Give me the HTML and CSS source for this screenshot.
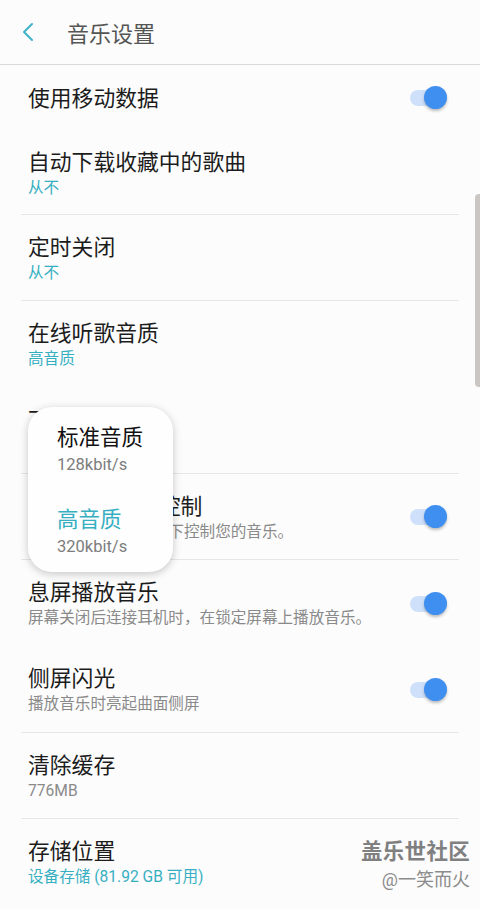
FILE: index.html
```html
<!DOCTYPE html>
<html lang="zh-CN">
<head>
    <title>音乐设置</title>
    <meta charset="UTF-8">
    <meta name="viewport" content="width=device-width, initial-scale=1.0">
    <link rel="stylesheet" href="styles.css">
</head>
<body>
    <div class="screen">
        <header class="topbar">
            <svg class="back" width="14" height="20" viewBox="0 0 14 20">
                <path d="M11 2 L3 10 L11 18" fill="none" stroke="#3bb4c6" stroke-width="2" stroke-linecap="round" stroke-linejoin="round"/>
            </svg>
            <span class="page-title">音乐设置</span>
        </header>

        <ul class="settings">
            <li class="row first plain">
                <div class="text"><div class="title">使用移动数据</div></div>
                <span class="toggle"></span>
            </li>
            <li class="row short">
                <div class="text">
                    <div class="title">自动下载收藏中的歌曲</div>
                    <div class="sub accent">从不</div>
                </div>
            </li>
            <li class="row">
                <div class="text">
                    <div class="title">定时关闭</div>
                    <div class="sub accent">从不</div>
                </div>
            </li>
            <li class="row plain">
                <div class="text">
                    <div class="title">在线听歌音质</div>
                    <div class="sub accent">高音质</div>
                </div>
            </li>
            <li class="row">
                <div class="text">
                    <div class="title">下载音质</div>
                    <div class="sub accent">标准音质</div>
                </div>
            </li>
            <li class="row">
                <div class="text">
                    <div class="title">锁定屏幕音乐控制</div>
                    <div class="sub">允许在锁定屏幕状态下控制您的音乐。</div>
                </div>
                <span class="toggle"></span>
            </li>
            <li class="row plain">
                <div class="text">
                    <div class="title">息屏播放音乐</div>
                    <div class="sub">屏幕关闭后连接耳机时，在锁定屏幕上播放音乐。</div>
                </div>
                <span class="toggle"></span>
            </li>
            <li class="row">
                <div class="text">
                    <div class="title">侧屏闪光</div>
                    <div class="sub">播放音乐时亮起曲面侧屏</div>
                </div>
                <span class="toggle"></span>
            </li>
            <li class="row">
                <div class="text">
                    <div class="title">清除缓存</div>
                    <div class="sub">776MB</div>
                </div>
            </li>
            <li class="row plain">
                <div class="text">
                    <div class="title">存储位置</div>
                    <div class="sub accent">设备存储 (81.92 GB 可用)</div>
                </div>
            </li>
        </ul>

        <!-- quality picker opened over the list -->
        <div class="popup">
            <div class="option">
                <div class="opt-name">标准音质</div>
                <div class="opt-rate">128kbit/s</div>
            </div>
            <div class="option selected">
                <div class="opt-name">高音质</div>
                <div class="opt-rate">320kbit/s</div>
            </div>
        </div>

        <div class="scrollbar"></div>

        <div class="watermark">
            <div class="wm-name">盖乐世社区</div>
            <div class="wm-user">@一笑而火</div>
        </div>
    </div>
</body>
</html>
```

FILE: styles.css
```css
* { box-sizing: border-box; }
body {
    margin: 0;
    font-family: Roboto, "Noto Sans CJK SC", sans-serif;
    background: #fcfcfc;
    color: #1c1c1c;
}
.screen {
    position: relative;
    width: 480px;
    height: 909px;
    overflow: hidden;
    background: #fcfcfc;
}
.topbar {
    height: 65px;
    display: flex;
    align-items: center;
    padding: 0 0 1px 21px;
    border-bottom: 1px solid #d9d9d9;
}
.back {
    display: block;
    margin-top: 1px;
}
.page-title {
    margin-left: 32px;
    font-size: 22px;
    color: #555;
}
.settings {
    list-style: none;
    margin: 0;
    padding: 0 21px;
}
.row {
    height: 86.25px;
    display: flex;
    align-items: center;
    border-bottom: 1px solid #e6e6e6;
    padding: 2px 12px 0 7px;
}
.row.first { height: 65px; }
.row.short { height: 85px; }
.row.plain { border-bottom-color: transparent; }
.text { flex: 1; }
.title {
    font-size: 21.8px;
    line-height: 29px;
}
.sub {
    font-size: 15.6px;
    line-height: 22px;
    color: #8a8a8a;
}
.sub.accent { color: #37afc2; }
.toggle {
    position: relative;
    width: 37px;
    height: 16px;
    border-radius: 8px;
    background: #cfe1fa;
}
.toggle::after {
    content: "";
    position: absolute;
    right: 0;
    top: -4px;
    width: 23px;
    height: 23px;
    border-radius: 50%;
    background: #3f8ff0;
    box-shadow: 0 2px 3px rgba(0,0,0,0.25);
}
.popup {
    position: absolute;
    left: 28px;
    top: 407px;
    width: 145px;
    height: 165px;
    background: #fefefe;
    border-radius: 24px;
    box-shadow: 0 2px 8px rgba(0,0,0,0.22);
    padding: 16px 0 0 29px;
}
.option { height: 82px; }
.opt-name {
    font-size: 21.5px;
    line-height: 30px;
    color: #111;
}
.opt-rate {
    font-size: 16.5px;
    line-height: 24px;
    color: #7c7c7c;
}
.option.selected .opt-name { color: #37afc2; }
.scrollbar {
    position: absolute;
    right: 0;
    top: 194px;
    width: 5px;
    height: 193px;
    background: #c9c6c3;
    border-radius: 4px 0 0 4px;
}
.watermark {
    position: absolute;
    right: 10px;
    top: 837px;
    text-align: right;
}
.wm-name {
    font-size: 21.5px;
    font-weight: bold;
    color: #808080;
    line-height: 30px;
    letter-spacing: 0.3px;
}
.wm-user {
    font-size: 18px;
    color: #8c8c8c;
    line-height: 26px;
}
```
